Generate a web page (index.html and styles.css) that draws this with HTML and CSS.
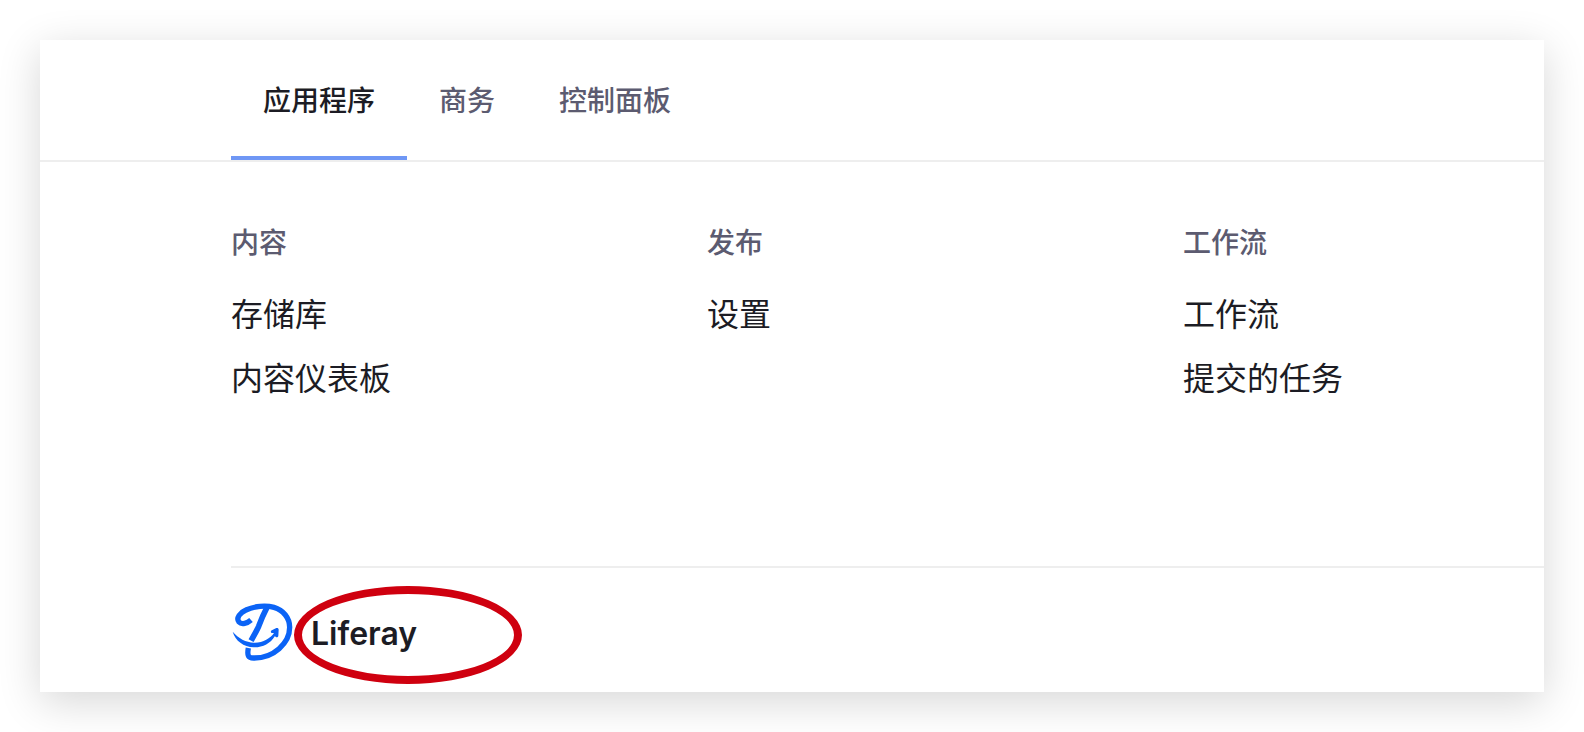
FILE: index.html
```html
<!DOCTYPE html>
<html lang="zh-CN">
  <head>
    <meta charset="UTF-8" />
    <meta name="viewport" content="width=device-width, initial-scale=1.0" />
    <title>Liferay</title>
    <link rel="stylesheet" href="styles.css">
  </head>
  <body>
    <div class="panel">
      <nav class="tabs">
        <a class="tab active" href="#applications">应用程序</a>
        <a class="tab" href="#commerce">商务</a>
        <a class="tab" href="#control-panel">控制面板</a>
      </nav>
      <main class="columns" id="applications">
        <section>
          <h2 class="title">内容</h2>
          <ul class="list">
            <li><a href="#">存储库</a></li>
            <li><a href="#">内容仪表板</a></li>
          </ul>
        </section>
        <section>
          <h2 class="title">发布</h2>
          <ul class="list">
            <li><a href="#">设置</a></li>
          </ul>
        </section>
        <section>
          <h2 class="title">工作流</h2>
          <ul class="list">
            <li><a href="#">工作流</a></li>
            <li><a href="#">提交的任务</a></li>
          </ul>
        </section>
      </main>
      <footer class="footer">
        <svg class="logo" viewBox="18 13 192 192" aria-hidden="true">
          <g fill="none" stroke="#0b63f6" stroke-linejoin="round">
            <path stroke-width="16" d="M78 73C67 83 50 88 42 79C32 67 46 50 63 43C88 31 122 28 147 35C174 43 194 66 194 95C194 143 145 187 88 187C69 188 66 180 70 157" />
            <path stroke-width="17" d="M126 35C116 54 108 73 101 92C94 108 86 121 78 135" />
          </g>
          <path fill="#0b63f6" d="M23 108C40 128 63 140 87 141C113 142 136 128 147 112L140 112C136 110 137 104 142 103L154 97C158 96 161 98 161 102L160 120C159 126 152 126 150 121C136 144 112 156 86 155C56 153 31 136 23 108Z" />
        </svg>
        <div class="name">Liferay<span class="marker"></span></div>
      </footer>
    </div>
  </body>
</html>
```

FILE: styles.css
```css
* {
  margin: 0;
  padding: 0;
  box-sizing: border-box;
}

body {
  padding: 40px;
  background: #fff;
  color: #1c1c24;
  font-family: Inter, "Noto Sans CJK SC", sans-serif;
}

a {
  color: inherit;
  text-decoration: none;
}

.panel {
  background: #fff;
  box-shadow: 0 10px 40px rgba(0, 0, 0, 0.16);
}

.tabs {
  display: flex;
  padding-left: 191px;
  border-bottom: 2px solid #eee;
}

.tab {
  padding: 41px 32px 35px;
  border-bottom: 4px solid transparent;
  color: #5c5b70;
  font-size: 28px;
  font-weight: 500;
  line-height: 40px;
}

.tab.active {
  border-color: #6f97f5;
  color: #1c1c24;
}

.columns {
  display: grid;
  grid-template-columns: 36.25% 36.25% 1fr;
  margin-left: 191px;
  padding: 61px 0 155px;
}

.title {
  margin-bottom: 20px;
  color: #5c5b70;
  font-size: 28px;
  font-weight: 500;
  line-height: 40px;
}

.list {
  list-style: none;
  font-size: 32px;
  line-height: 64px;
}

.footer {
  display: flex;
  align-items: center;
  gap: 16px;
  margin-left: 191px;
  padding: 32px 0 28px;
  border-top: 2px solid #eee;
}

.logo {
  width: 64px;
  height: 64px;
}

.name {
  position: relative;
  padding-top: 4px;
  font-size: 32px;
  font-weight: 600;
  line-height: 40px;
}

/* red ring drawn over the name */
.marker {
  position: absolute;
  top: -24px;
  left: -17px;
  width: 228px;
  height: 98px;
  border: 8px solid #cf000f;
  border-radius: 50%;
}
```
